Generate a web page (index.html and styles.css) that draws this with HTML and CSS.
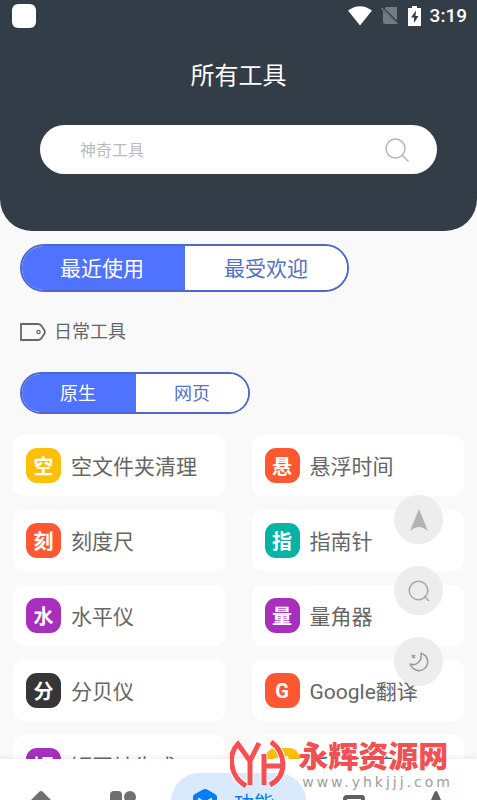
FILE: index.html
```html
<!DOCTYPE html>
<html lang="zh-CN">
<head>
<meta charset="utf-8">
<meta name="viewport" content="width=device-width, initial-scale=1">
<title>所有工具</title>
<link rel="stylesheet" href="styles.css">
</head>
<body>
<div class="app">
  <header class="header">
    <div class="status">
      <span class="status-app"></span>
      <div class="status-icons">
        <svg width="24" height="20" viewBox="0 0 24 20"><path d="M0 4.500Q12-4 24 4.500L12 19.500Z" fill="#fff"/></svg>
        <svg width="18" height="20" viewBox="0 0 18 20"><path d="M5 1h11v13.500L3.500 2.500Z M2 4.500L15.500 18H4q-2 0-2-2Z" fill="#737a82"/><path d="M.5 2l16 16" stroke="#737a82" stroke-width="1.500"/></svg>
        <svg width="13" height="20" viewBox="0 0 13 20"><path d="M4 0h5v2h4v18H0V2h4Z" fill="#fff"/><path d="M8 4.500L3 11.500h3V17l4.500-7H7.500Z" fill="#333c47"/></svg>
        <span class="clock">3:19</span>
      </div>
    </div>
    <h1 class="title">所有工具</h1>
    <form class="search">
      <input class="search-input" type="text" placeholder="神奇工具" aria-label="神奇工具">
      <button class="search-button" type="button" aria-label="搜索">
        <svg width="24" height="24" viewBox="0 0 24 24" fill="none" stroke="#b5b5b5" stroke-width="1.500"><circle cx="10.500" cy="10.500" r="9.500"/><path d="M17 17l6.500 6.500"/></svg>
      </button>
    </form>
  </header>

  <main class="content">
    <div class="segmented segmented-large">
      <button class="segment active" type="button">最近使用</button>
      <button class="segment" type="button">最受欢迎</button>
    </div>
    <h2 class="section">
      <svg width="26" height="18" viewBox="0 0 26 18" fill="none" stroke="#666" stroke-width="1.800"><path d="M1 1h17q2 0 3.200 1.600L24.500 7.500q.8 1.500 0 3L21.200 15.400Q20 17 18 17H1Z"/><circle cx="18.500" cy="9" r="1.700" stroke-width="1.200"/></svg>
      日常工具
    </h2>
    <div class="segmented segmented-small">
      <button class="segment active" type="button">原生</button>
      <button class="segment" type="button">网页</button>
    </div>
    <div class="tools">
      <a class="tool" href="#"><span class="badge yellow">空</span><span class="name">空文件夹清理</span></a>
      <a class="tool" href="#"><span class="badge orange">悬</span><span class="name">悬浮时间</span></a>
      <a class="tool" href="#"><span class="badge orange">刻</span><span class="name">刻度尺</span></a>
      <a class="tool" href="#"><span class="badge teal">指</span><span class="name">指南针</span></a>
      <a class="tool" href="#"><span class="badge purple">水</span><span class="name">水平仪</span></a>
      <a class="tool" href="#"><span class="badge purple">量</span><span class="name">量角器</span></a>
      <a class="tool" href="#"><span class="badge dark">分</span><span class="name">分贝仪</span></a>
      <a class="tool" href="#"><span class="badge orange">G</span><span class="name">Google翻译</span></a>
      <a class="tool" href="#"><span class="badge purple">短</span><span class="name">短网址生成</span></a>
      <a class="tool" href="#"><span class="badge yellow">手</span><span class="name">手持弹幕</span></a>
    </div>
  </main>

  <div class="floating">
    <button class="fab" type="button" aria-label="返回顶部"><svg width="18" height="22" viewBox="0 0 18 22"><path d="M9 0l9 22q-5-4-9-4t-9 4Z" fill="#b3b3b3"/></svg></button>
    <button class="fab" type="button" aria-label="搜索"><svg width="22" height="22" viewBox="0 0 22 22" fill="none" stroke="#a8a8a8" stroke-width="1.500"><circle cx="10.500" cy="10.500" r="9.300"/><path d="M16 16l5 5"/></svg></button>
    <button class="fab" type="button" aria-label="夜间模式"><svg width="20" height="20" viewBox="0 0 20 20" fill="none" stroke="#999" stroke-width="1.500" stroke-linejoin="round"><path d="M12 1.200C20 3.500 20.500 13 15 17C10 20.500 3.500 18 1.200 12C7 14.500 13.500 9 12 1.200Z"/><path d="M3 3l3 3M6 3l-3 3"/></svg></button>
  </div>

  <nav class="nav">
    <a class="nav-item" href="#" aria-label="首页"><svg width="28" height="26" viewBox="0 0 28 26"><path d="M14 0Q15 0 16 1L28 13H23V26H5V13H0L12 1Q13 0 14 0Z" fill="#707070"/></svg></a>
    <a class="nav-item" href="#" aria-label="分类"><svg width="28" height="28" viewBox="0 0 28 28" fill="#707070"><rect x="1" width="12" height="12" rx="4"/><circle cx="21" cy="6" r="6"/><rect x="1" y="15" width="12" height="12" rx="4"/><rect x="15" y="15" width="12" height="12" rx="4"/></svg></a>
    <a class="nav-item current" href="#"><svg width="24" height="26" viewBox="0 0 24 26"><path d="M10 .6q2-1.200 4 0l8 4.400q2 1 2 3v10q0 2-2 3l-8 4.400q-2 1.200-4 0l-8-4.400q-2-1-2-3V8q0-2 2-3Z" fill="#087bf5"/><path d="M5 9.500l7 4 7-4M12 13.500V21" fill="none" stroke="#d9eafd" stroke-width="2"/></svg>功能</a>
    <a class="nav-item low" href="#" aria-label="消息"><svg width="22" height="22" viewBox="0 0 22 22"><path d="M4 2h15q1 0 1 2V20H2V4q0-2 2-2Z" fill="none" stroke="#606060" stroke-width="4"/></svg></a>
    <a class="nav-item" href="#" aria-label="收藏"><svg width="28" height="26" viewBox="0 0 28 26"><path d="M12.500 1q1.500-2 3 0L19 9l9 1-7 6 2 9-9-5-9 5 2-9-7-6 9-1Z" fill="#606060"/></svg></a>
  </nav>

  <div class="watermark">
    <svg class="mark" width="56" height="50" viewBox="0 0 56 50" fill="none">
      <g stroke="#fff" stroke-width="7"><path d="M16 46C-1 36-2 14 8 4L20 21V45M29 3L20 21"/><path d="M34 14V45M34 26H51M41 2C56 12 58 36 40 45"/></g>
      <g stroke="#f5484b" stroke-width="5"><path d="M16 46C-1 36-2 14 8 4L20 21V45M29 3L20 21"/><path d="M34 14V45M34 26H51M41 2C56 12 58 36 40 45"/></g>
    </svg>
    <div class="mark-text"><span class="mark-name">永辉资源网</span><span class="mark-url">www.yhkjjj.com</span></div>
  </div>
</div>
</body>
</html>
```
FILE: styles.css
```css
* { box-sizing: border-box; }
body {
  margin: 0;
  background: #f9f9f9;
  color: #666;
  font-family: Roboto, "Noto Sans CJK SC", sans-serif;
}
button, input { font: inherit; }
button { padding: 0; border: 0; cursor: pointer; }
a { color: inherit; text-decoration: none; }
svg { display: block; flex: none; }
.app { position: relative; height: 100vh; overflow: hidden; }

.header {
  padding: 0 40px 57px;
  background: #333d48;
  border-radius: 0 0 32px 32px;
}
.status {
  display: flex;
  justify-content: space-between;
  align-items: center;
  height: 32px;
  margin: 0 -28px;
}
.status-app { width: 24px; height: 24px; border-radius: 6px; background: #fff; }
.status-icons { display: flex; align-items: center; gap: 9px; margin-right: -2px; }
.clock { color: #fff; font-size: 19px; font-weight: 500; line-height: 24px; }
.title {
  margin: 25px 0 30px;
  color: #fff;
  font-size: 24px;
  font-weight: 400;
  line-height: 38px;
  text-align: center;
}
.search {
  display: flex;
  align-items: center;
  height: 49px;
  padding: 0 28px 0 40px;
  border-radius: 25px;
  background: #fff;
}
.search-input {
  flex: 1;
  min-width: 0;
  padding: 2px 0 0;
  border: 0;
  outline: 0;
  background: none;
  font-size: 16px;
}
.search-input::placeholder { color: #bbb; opacity: 1; }
.search-button { background: none; }

.content { padding: 13px 13px 0; }
.segmented {
  display: flex;
  width: fit-content;
  margin-left: 7px;
  overflow: hidden;
  border: 2px solid #5068cc;
  border-radius: 24px;
  background: #fff;
}
.segment { background: #fff; color: #5370c4; }
.segment.active { background: #5073ff; color: #fff; }
.segmented-large { height: 48px; font-size: 21px; }
.segmented-large .segment { padding: 0 39px 2px; }
.segmented-large .active { padding: 0 41px 2px 38px; }
.segmented-small { height: 42px; font-size: 18px; }
.segmented-small .segment { padding: 0 38px 2px; }
.segmented-small .active { padding: 0 40px 2px 38px; }
.section {
  display: flex;
  align-items: center;
  gap: 8px;
  margin: 26px 7px;
  font-size: 18px;
  font-weight: 400;
  line-height: 28px;
}
.tools {
  display: grid;
  grid-template-columns: 1fr 1fr;
  gap: 14px 26px;
  margin-top: 21px;
}
.tool {
  display: flex;
  align-items: center;
  gap: 10px;
  height: 61px;
  padding: 0 13px;
  border-radius: 11px;
  background: #fff;
  font-size: 21px;
  white-space: nowrap;
}
.name { padding-bottom: 2px; }
.badge {
  display: flex;
  justify-content: center;
  align-items: center;
  width: 35px;
  height: 35px;
  border-radius: 11px;
  color: #fff;
  font-size: 20px;
  font-weight: 700;
}
.yellow { background: #fdc008; }
.orange { background: #fd5832; }
.teal { background: #08b3a5; }
.purple { background: #a72fbb; }
.dark { background: #363636; }

.floating {
  position: absolute;
  right: 34px;
  bottom: 114px;
  display: flex;
  flex-direction: column;
  gap: 22px;
}
.fab {
  display: flex;
  justify-content: center;
  align-items: center;
  width: 49px;
  height: 49px;
  border-radius: 50%;
  background: #ededed;
}

.nav {
  position: absolute;
  left: 0;
  right: 0;
  bottom: 0;
  display: grid;
  grid-template-columns: 1fr 1fr 149px 1fr 1fr;
  height: 41px;
  padding: 14px 0 0;
  overflow: hidden;
  background: #fff;
  box-shadow: 0 -1px 6px rgba(0, 0, 0, 0.08);
}
.nav-item { display: flex; justify-content: center; align-items: flex-start; padding-top: 18px; }
.nav-item.low { padding-top: 22px; }
.nav-item.current {
  gap: 17px;
  height: 56px;
  margin: 0 7px;
  padding: 16px 10px 0 0;
  border-radius: 28px;
  background: #d9eafd;
  color: #087bf5;
  font-size: 20px;
  line-height: 30px;
}

.watermark {
  position: absolute;
  right: 24px;
  bottom: 9px;
  display: flex;
  align-items: center;
  gap: 12px;
  pointer-events: none;
  opacity: 0.95;
}
.mark-text { display: flex; flex-direction: column; padding-top: 2px; }
.mark-name { color: #f0484b; font-size: 30px; font-weight: 900; line-height: 32px; }
.mark-url {
  padding-left: 4px;
  color: #999;
  font-family: "DejaVu Sans", sans-serif;
  font-size: 14px;
  letter-spacing: 3px;
  line-height: 18px;
}
```
